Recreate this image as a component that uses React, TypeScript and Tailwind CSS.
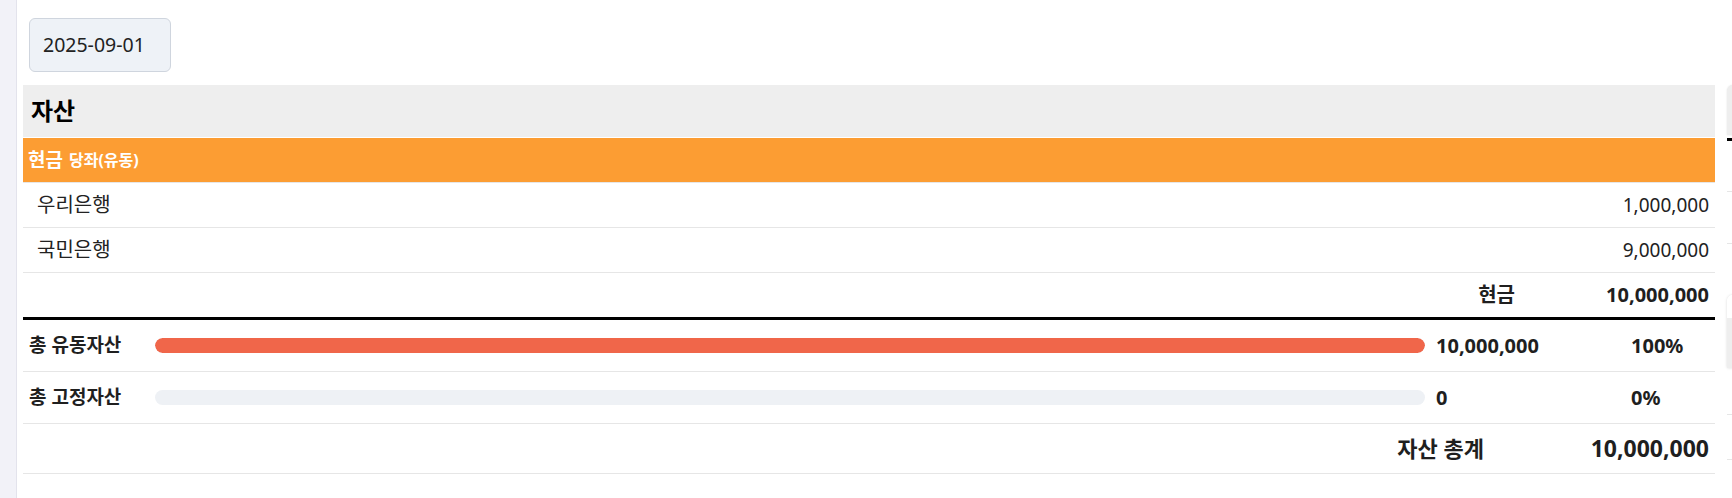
import React from "react";

const accounts = [
  { name: "우리은행", amount: "1,000,000" },
  { name: "국민은행", amount: "9,000,000" },
];

const summary = [
  { label: "총 유동자산", value: "10,000,000", pct: 100 },
  { label: "총 고정자산", value: "0", pct: 0 },
];

function AssetTable() {
  return (
    <section className="w-[1692px] shrink-0">
      {/* section title */}
      <div className="h-[53px] bg-[#eeeeee] border-b border-white px-[8px] flex items-center text-[24px] font-bold text-black">
        자산
      </div>

      {/* group header */}
      <div className="h-[45px] bg-[#fc9d33] border-b border-[#e6e6e6] px-[5px] flex items-center gap-[6px] text-white font-bold">
        <span className="text-[19px]">현금</span>
        <span className="text-[16px]">당좌(유동)</span>
      </div>

      {accounts.map((a) => (
        <div
          key={a.name}
          className="h-[45px] border-b border-[#e6e6e6] pl-[14px] pr-[6px] flex items-center justify-between text-[#222]"
        >
          <span className="text-[20px]">{a.name}</span>
          <span className="text-[19px]">{a.amount}</span>
        </div>
      ))}

      <div className="h-[47px] border-b-[3px] border-black pr-[6px] flex items-center justify-end text-[#1f1f1f] font-bold">
        <span className="text-[20px]">현금</span>
        <span className="w-[194px] text-right text-[20px]">10,000,000</span>
      </div>

      {summary.map((s) => (
        <div
          key={s.label}
          className="h-[52px] border-b border-[#e6e6e6] px-[6px] grid grid-cols-[126px_1fr_195px_78px] items-center font-bold text-[#1f1f1f]"
        >
          <span className="text-[19px]">{s.label}</span>
          <div className="mr-[11px] h-[15px] rounded-full bg-[#eef1f5] overflow-hidden">
            <div
              className="h-full rounded-full bg-[#f0664a]"
              style={{ width: `${s.pct}%` }}
            />
          </div>
          <span className="text-[20px]">{s.value}</span>
          <span className="text-[20px]">{s.pct}%</span>
        </div>
      ))}

      <div className="h-[50px] border-b border-[#e6e6e6] pr-[6px] flex items-center justify-end font-bold text-[#1f1f1f]">
        <span className="text-[22px]">자산 총계</span>
        <span className="w-[225px] text-right text-[23px]">10,000,000</span>
      </div>
    </section>
  );
}

// next table, only its left edge is on screen
function NextTable() {
  return (
    <section className="w-[1692px] shrink-0">
      <div className="h-[50px] bg-[#eeeeee] rounded-tl-md shadow-[0_0_2px_rgba(0,0,0,0.12)]" />
      <div className="mt-[3px] h-[3px] bg-black" />
      <div className="h-[51px] border-b border-[#e6e6e6]" />
      <div className="h-[52px] border-b border-[#e6e6e6]" />
      <div className="mt-[51px] h-[73px] rounded-tl-md shadow-[0_0_3px_rgba(0,0,0,0.15)] flex flex-col">
        <div className="h-[23px] bg-white rounded-tl-md" />
        <div className="flex-1 bg-[#eeeeee]" />
      </div>
      <div className="h-[47px] border-b border-[#e6e6e6]" />
      <div className="h-[45px] border-b border-[#e6e6e6]" />
    </section>
  );
}

export default function App() {
  return (
    <div className="flex w-[1732px] h-[498px] overflow-hidden bg-white font-['Noto_Sans','Noto_Sans_CJK_KR',sans-serif]">
      <aside className="w-[17px] shrink-0 bg-[#f2f2f8] border-r border-[#e3e3ec]" />
      <main className="flex-1 min-w-0 pl-[6px] pt-[18px]">
        <div className="ml-[6px] w-[142px] h-[54px] rounded-md border border-[#cfd5de] bg-[#eef2f7] pl-[13px] flex items-center text-[19.5px] text-[#222]">
          2025-09-01
        </div>
        <div className="mt-[13px] flex gap-[12px]">
          <AssetTable />
          <NextTable />
        </div>
      </main>
    </div>
  );
}
